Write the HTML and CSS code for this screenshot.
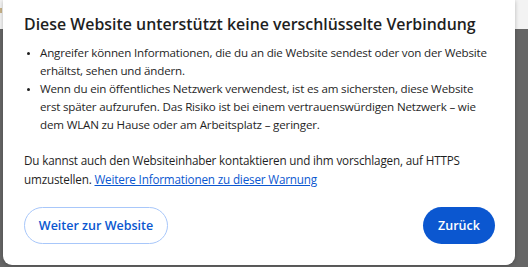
FILE: index.html
```html
<!DOCTYPE html>
<html lang="de">
<head>
	<meta charset="UTF-8">
	<meta name="viewport" content="width=device-width, initial-scale=1.0">
	<title>Unsichere Verbindung</title>
	<link rel="stylesheet" href="styles.css">
</head>
<body>

	<!-- Page behind the dialog -->
	<div class="backdrop">
		<div class="backdrop-top">
			<span class="tab-mark"></span>
		</div>
		<div class="backdrop-shade"></div>
	</div>

	<!-- Warning dialog -->
	<div class="dialog" role="dialog" aria-labelledby="dialogTitle">
		<h1 id="dialogTitle" class="dialog-title">Diese Website unterstützt keine verschlüsselte Verbindung</h1>

		<ul class="risk-list">
			<li>Angreifer können Informationen, die du an die Website sendest oder von der Website erhältst, sehen und ändern.</li>
			<li>Wenn du ein öffentliches Netzwerk verwendest, ist es am sichersten, diese Website erst später aufzurufen. Das Risiko ist bei einem vertrauenswürdigen Netzwerk – wie dem WLAN zu Hause oder am Arbeitsplatz – geringer.</li>
		</ul>

		<p class="dialog-note"><span>Du kannst auch den Websiteinhaber kontaktieren und ihm vorschlagen, auf HTTPS</span> <span>umzustellen.</span> <a href="#" class="dialog-link">Weitere Informationen zu dieser Warnung</a></p>

		<div class="dialog-actions">
			<button type="button" class="btn btn-outline">Weiter zur Website</button>
			<button type="button" class="btn btn-primary">Zurück</button>
		</div>
	</div>

</body>
</html>
```

FILE: styles.css
```css
html, body {
	margin: 0;
	height: 100%;
}
body {
	font-family: "Open Sans", "Noto Sans", Arial, sans-serif;
	color: #1f1f1f;
	overflow: hidden;
	display: flex;
	flex-direction: column;
}
.backdrop {
	flex: 1;
	display: flex;
	flex-direction: column;
}
.backdrop-top {
	height: 29px;
	background-color: #f3f3f3;
	padding-top: 8px;
	box-sizing: border-box;
}
.tab-mark {
	display: block;
	width: 2px;
	height: 5px;
	background-color: #c9b48a;
}
.backdrop-shade {
	flex: 1;
	background-color: #666666;
}
.dialog {
	position: absolute;
	left: 3px;
	top: 0;
	width: 512px;
	height: 265px;
	box-sizing: border-box;
	padding: 13px 20px 0 21px;
	background-color: #ffffff;
	border-radius: 0 0 9px 9px;
	box-shadow: 0 1px 4px rgba(0, 0, 0, 0.25);
}
.dialog-title {
	margin: 0;
	font-size: 15.9px;
	line-height: 22px;
	font-weight: 600;
	color: #1f1f1f;
}
.risk-list {
	list-style: none;
	margin: 9px 0 0;
	padding: 0;
}
.risk-list li {
	position: relative;
	padding-left: 16px;
	font-size: 11.6px;
	line-height: 18px;
	letter-spacing: -0.18px;
}
.risk-list li::before {
	content: "";
	position: absolute;
	left: 3px;
	top: 8px;
	width: 3px;
	height: 3px;
	border-radius: 50%;
	background-color: #1f1f1f;
}
.dialog-note {
	margin: 17px 0 0;
	font-size: 11.7px;
	line-height: 19px;
	letter-spacing: -0.17px;
}
.dialog-link {
	color: #0b57d0;
	text-decoration: underline;
}
.dialog-actions {
	display: flex;
	justify-content: space-between;
	margin-top: 18px;
}
.btn {
	height: 37px;
	border-radius: 19px;
	font-family: inherit;
	font-size: 12.5px;
	font-weight: 600;
	cursor: pointer;
}
.btn-outline {
	width: 144px;
	background-color: #ffffff;
	color: #0b57d0;
	border: 1px solid #a8c7fa;
}
.btn-primary {
	width: 72px;
	background-color: #0b57d0;
	color: #ffffff;
	border: none;
}
```
